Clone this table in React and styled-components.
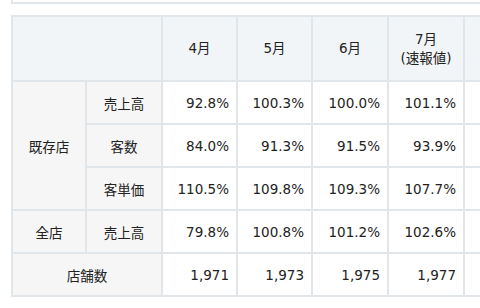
import React from "react";
import styled, { createGlobalStyle } from "styled-components";

const Global = createGlobalStyle`
  html, body { margin: 0; padding: 0; background: #fff; }
  body { overflow: hidden; width: 480px; height: 308px; }
`;

const Page = styled.div`
  width: 480px;
  height: 308px;
  overflow: hidden;
  padding-left: 11px;
  box-sizing: border-box;
  font-family: "DejaVu Sans", "Noto Sans CJK JP", sans-serif;
  color: #222;
`;

const PrevBox = styled.div`
  width: 560px;
  height: 2px;
  border-left: 2px solid #e1e6eb;
  border-bottom: 2px solid #e1e6eb;
  margin-bottom: 11px;
`;

const Table = styled.table`
  border-collapse: collapse;
  table-layout: fixed;
  width: 560px;
`;

const Th = styled.th`
  background: #f2f5f8;
  border: 2px solid #e1e6eb;
  height: 63px;
  padding: 0;
  font-weight: normal;
  font-size: 13.5px;
  line-height: 19px;
  text-align: center;
  vertical-align: middle;
`;

const Label = styled.td`
  background: #f6f6f6;
  border: 2px solid #e1e6eb;
  height: 41px;
  padding: 0;
  font-size: 13.5px;
  text-align: center;
  vertical-align: middle;
  font-family: "Noto Sans CJK JP", sans-serif;
`;

const Num = styled.td`
  background: #fff;
  border: 2px solid #e1e6eb;
  height: 41px;
  padding: 0 7px 0 0;
  font-size: 13.5px;
  text-align: right;
  vertical-align: middle;
`;

const months = ["4月", "5月", "6月"];

const rows = [
  { group: "既存店", span: 3, label: "売上高", v: ["92.8%", "100.3%", "100.0%", "101.1%"] },
  { label: "客数", v: ["84.0%", "91.3%", "91.5%", "93.9%"] },
  { label: "客単価", v: ["110.5%", "109.8%", "109.3%", "107.7%"] },
  { group: "全店", span: 1, label: "売上高", v: ["79.8%", "100.8%", "101.2%", "102.6%"] },
];

export default function App() {
  return (
    <>
      <Global />
      <Page>
        <PrevBox />
        <Table>
          <colgroup>
            <col style={{ width: 74 }} />
            <col style={{ width: 76 }} />
            <col style={{ width: 75 }} />
            <col style={{ width: 75 }} />
            <col style={{ width: 76 }} />
            <col style={{ width: 76 }} />
            <col style={{ width: 108 }} />
          </colgroup>
          <thead>
            <tr>
              <Th colSpan={2} />
              {months.map((m) => (
                <Th key={m}>{m}</Th>
              ))}
              <Th>
                7月
                <br />
                (速報値)
              </Th>
              <Th />
            </tr>
          </thead>
          <tbody>
            {rows.map((r, i) => (
              <tr key={i}>
                {r.group && <Label rowSpan={r.span}>{r.group}</Label>}
                <Label>{r.label}</Label>
                {r.v.map((x, j) => (
                  <Num key={j}>{x}</Num>
                ))}
                <Num />
              </tr>
            ))}
            <tr>
              <Label colSpan={2}>店舗数</Label>
              {["1,971", "1,973", "1,975", "1,977"].map((x) => (
                <Num key={x}>{x}</Num>
              ))}
              <Num />
            </tr>
          </tbody>
        </Table>
      </Page>
    </>
  );
}
